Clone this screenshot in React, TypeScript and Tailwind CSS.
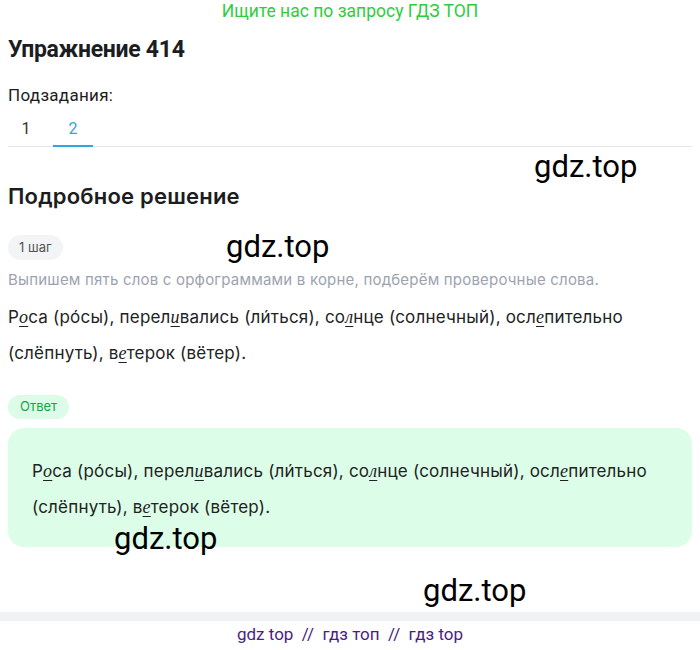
import React from 'react';

const Mark = ({ children }: { children: React.ReactNode }) => (
  <span className="italic underline underline-offset-[3px] decoration-[1px] leading-none [font-family:'Liberation_Serif',serif] text-[18px]">{children}</span>
);

function AnswerText() {
  return (
    <>
      Р<Mark>о</Mark>са (ро́сы), перел<Mark>и</Mark>вались (ли́ться), со<Mark>л</Mark>нце (солнечный), осл<Mark>е</Mark>пительно
      <br />
      (слёпнуть), в<Mark>е</Mark>терок (вётер).
    </>
  );
}

const watermarks = [
  { x: 534, y: 149 },
  { x: 226, y: 229 },
  { x: 114, y: 521 },
  { x: 423, y: 573 },
];

export default function App() {
  return (
    <div className="relative w-[700px] h-[650px] bg-white overflow-hidden [font-family:Inter,sans-serif] text-[#1c1d21]">
      {/* top banner */}
      <div className="text-center text-[17.5px] leading-[22px] text-[#2ecc40] [font-family:Roboto,sans-serif]">
        Ищите нас по запросу ГДЗ ТОП
      </div>

      <div className="px-2">
        <h1 className="mt-[14px] text-[23px] leading-[28px] font-bold tracking-[-0.3px] [font-family:Roboto,sans-serif]">
          Упражнение 414
        </h1>

        <div className="mt-[21px] text-[17px] leading-[20px] tracking-[0.3px] [font-family:Roboto,sans-serif]">Подзадания:</div>

        {/* tabs */}
        <div className="mt-[3px] flex border-b border-[#e5e7eb] text-[16px] [font-family:Roboto,sans-serif]">
          <div className="w-[36px] pt-[13px] pb-[9px] leading-[16px] text-center text-[#333]">1</div>
          <div className="ml-[9px] w-[40px] pt-[13px] pb-[7px] leading-[16px] text-center text-[#2ea8dc] border-b-2 border-[#2ea8dc] -mb-px">2</div>
        </div>

        <h2 className="mt-[35px] text-[22px] leading-[28px] font-semibold tracking-[0.2px]">Подробное решение</h2>

        <div className="mt-[25px] inline-flex h-[25px] items-center rounded-full bg-[#f3f4f6] px-[11px] text-[13px] text-[#555]">
          1 шаг
        </div>

        <p className="mt-[10px] text-[15px] leading-[20px] tracking-[0.2px] text-[#9ca3af]">
          Выпишем пять слов с орфограммами в корне, подберём проверочные слова.
        </p>

        <p className="mt-[9px] text-[17px] leading-[36px] tracking-[0.2px] text-[#222]">
          <AnswerText />
        </p>

        <div className="mt-[24px] inline-flex h-[24px] items-center rounded-full bg-[#dcfce7] px-[12px] text-[13px] text-[#16a34a]">
          Ответ
        </div>

        <div className="mt-[9px] rounded-[16px] bg-[#dcfde8] px-[24px] pt-[25px] pb-[22px] text-[17px] leading-[36px] tracking-[0.2px] text-[#222]">
          <AnswerText />
        </div>
      </div>

      {/* footer */}
      <div className="mt-[65px] h-[9px] bg-[#f1f2f3]" />
      <div className="mt-[2px] text-center text-[17px] leading-[22px] text-[#4b1d82] whitespace-pre [font-family:Roboto,sans-serif]">
        {'gdz top  //  гдз топ  //  гдз top'}
      </div>

      {watermarks.map((w, i) => (
        <div
          key={i}
          className="absolute text-[31px] leading-[36px] text-black [font-family:Roboto,sans-serif] pointer-events-none"
          style={{ left: w.x, top: w.y }}
        >
          gdz.top
        </div>
      ))}
    </div>
  );
}
